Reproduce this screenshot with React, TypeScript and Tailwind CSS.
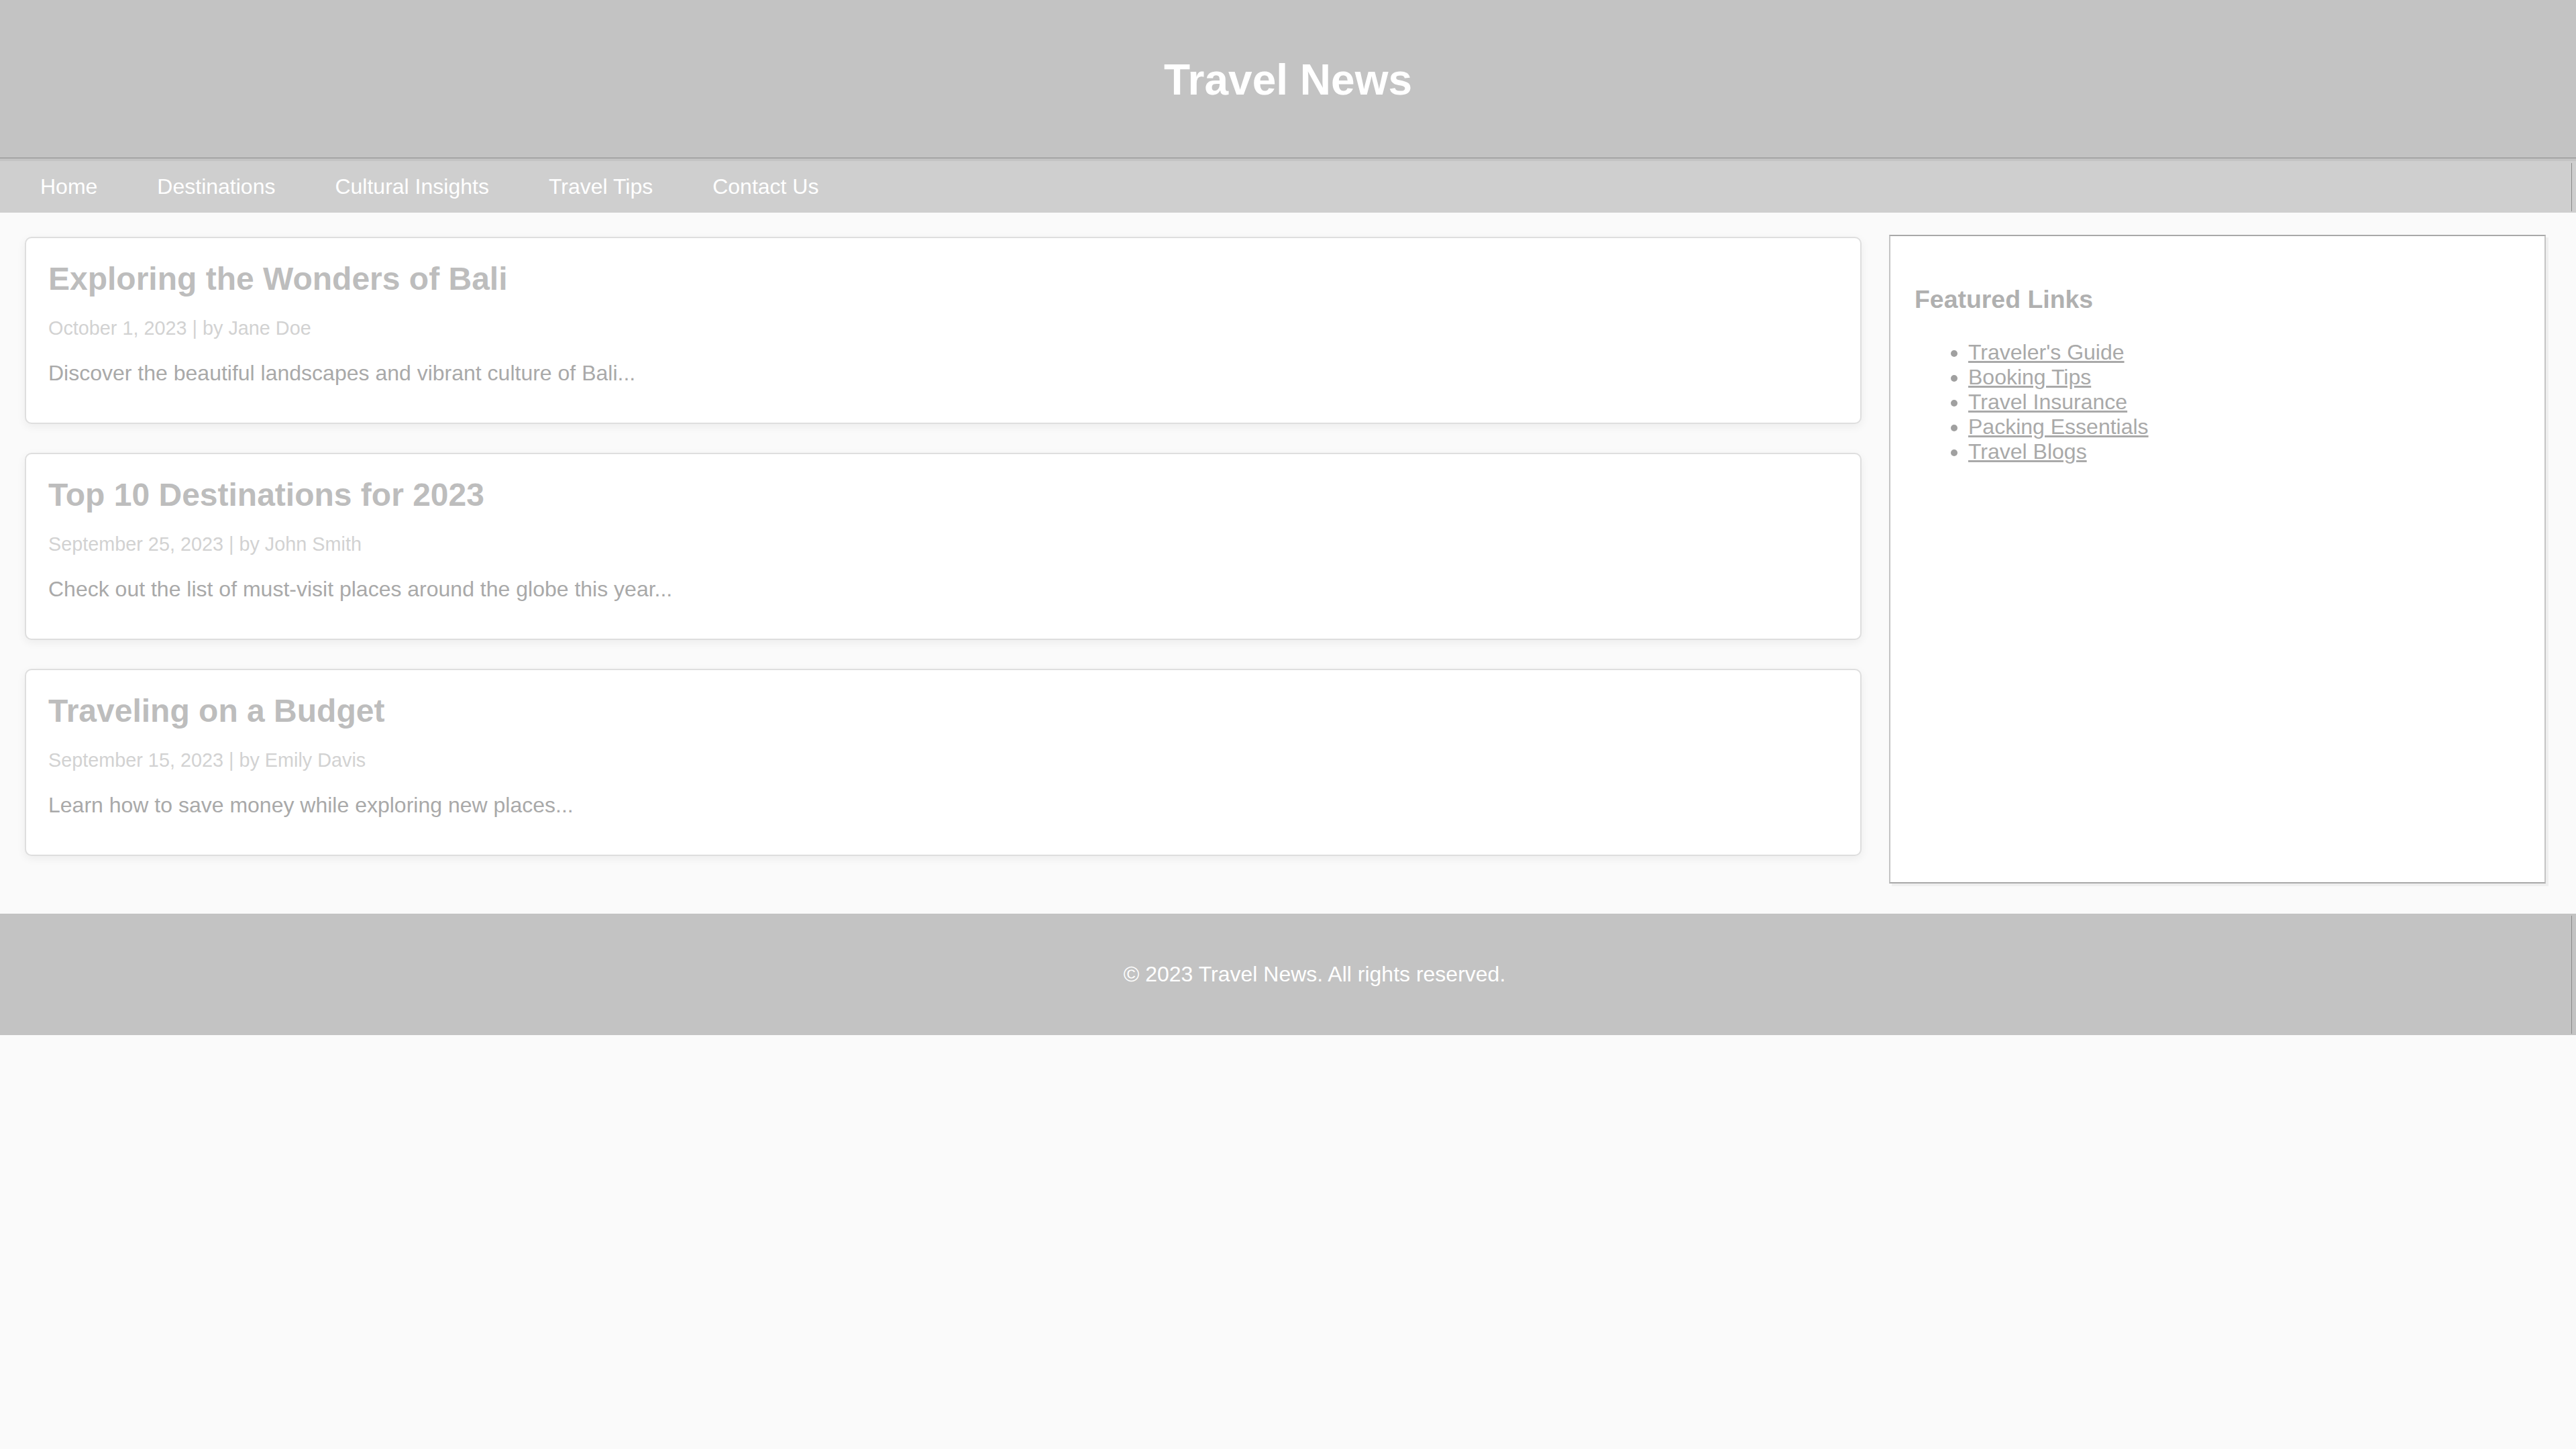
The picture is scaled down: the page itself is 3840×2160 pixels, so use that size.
import React from 'react';

/** 文章数据 */
const ARTICLES = [
  {
    title: 'Exploring the Wonders of Bali',
    meta: 'October 1, 2023 | by Jane Doe',
    excerpt: 'Discover the beautiful landscapes and vibrant culture of Bali...'
  },
  {
    title: 'Top 10 Destinations for 2023',
    meta: 'September 25, 2023 | by John Smith',
    excerpt: 'Check out the list of must-visit places around the globe this year...'
  },
  {
    title: 'Traveling on a Budget',
    meta: 'September 15, 2023 | by Emily Davis',
    excerpt: 'Learn how to save money while exploring new places...'
  }
];

const NAV_LINKS = ['Home', 'Destinations', 'Cultural Insights', 'Travel Tips', 'Contact Us'];

const FEATURED = ["Traveler's Guide", 'Booking Tips', 'Travel Insurance', 'Packing Essentials', 'Travel Blogs'];

const ArticleCard: React.FC<{ title: string; meta: string; excerpt: string }> = ({ title, meta, excerpt }) => (
  <article className="h-[279px] bg-white border-2 border-[#dedede] rounded-[10px] shadow-[0_4px_14px_rgba(0,0,0,0.06)] px-[33px] pt-[33px]">
    <h2 className="text-[48px] leading-[55px] font-bold text-[#bdbdbd] mb-[30px]">{title}</h2>
    <p className="text-[28.8px] leading-[33px] text-[#d2d2d2] mb-[32px]">{meta}</p>
    <p className="text-[32px] leading-[37px] text-[#a9a9a9]">{excerpt}</p>
  </article>
);

export default function App() {
  return (
    <div className="min-h-[2160px] bg-[#fafafa] font-['Liberation_Sans',Arial,sans-serif]">
      {/* 头部 */}
      <header className="h-[235px] bg-[#c3c3c3] flex items-center justify-center">
        <h1 className="text-[64px] leading-[74px] font-bold text-white pt-[3px]">Travel News</h1>
      </header>
      <div className="h-px bg-[#8a8a8a]" />
      <div className="h-[4px] bg-[#c3c3c3]" />

      {/* 导航 */}
      <nav className="h-[77px] bg-[#cfcfcf] flex items-center pl-[60px] gap-[89px]">
        {NAV_LINKS.map((link) => (
          <a key={link} className="text-[32px] leading-[37px] text-white">
            {link}
          </a>
        ))}
        <div className="ml-auto mr-[6px] w-px h-[72px] bg-[#8a8a8a]" />
      </nav>

      {/* 主体 */}
      <main className="flex items-start pl-[37px] pr-[45px] pb-[45px]">
        <section className="flex-1 flex flex-col gap-[43px] pt-[36px]">
          {ARTICLES.map((a) => (
            <ArticleCard key={a.title} {...a} />
          ))}
        </section>

        <aside className="ml-[41px] mt-[33px] w-[979px] h-[967px] bg-white border-2 border-[#c4c4c4] border-t-[#a8a8a8] border-b-[#a8a8a8] shadow-[4px_4px_0_#efefef] px-[36px] pt-[73px]">
          <h3 className="text-[37.44px] leading-[43px] font-bold text-[#b0b0b0] mb-[39px]">Featured Links</h3>
          <ul className="list-disc pl-[80px] text-[32px] leading-[37px] text-[#a9a9a9] marker:text-[#a0a0a0]">
            {FEATURED.map((f) => (
              <li key={f}>
                <a className="underline">{f}</a>
              </li>
            ))}
          </ul>
        </aside>
      </main>

      {/* 页脚 */}
      <footer className="h-[181px] bg-[#c3c3c3] flex items-center">
        <p className="flex-1 text-center pl-[86px] text-[32px] leading-[37px] text-white">
          © 2023 Travel News. All rights reserved.
        </p>
        <div className="mr-[6px] w-px h-[176px] bg-[#8a8a8a]" />
      </footer>
    </div>
  );
}
